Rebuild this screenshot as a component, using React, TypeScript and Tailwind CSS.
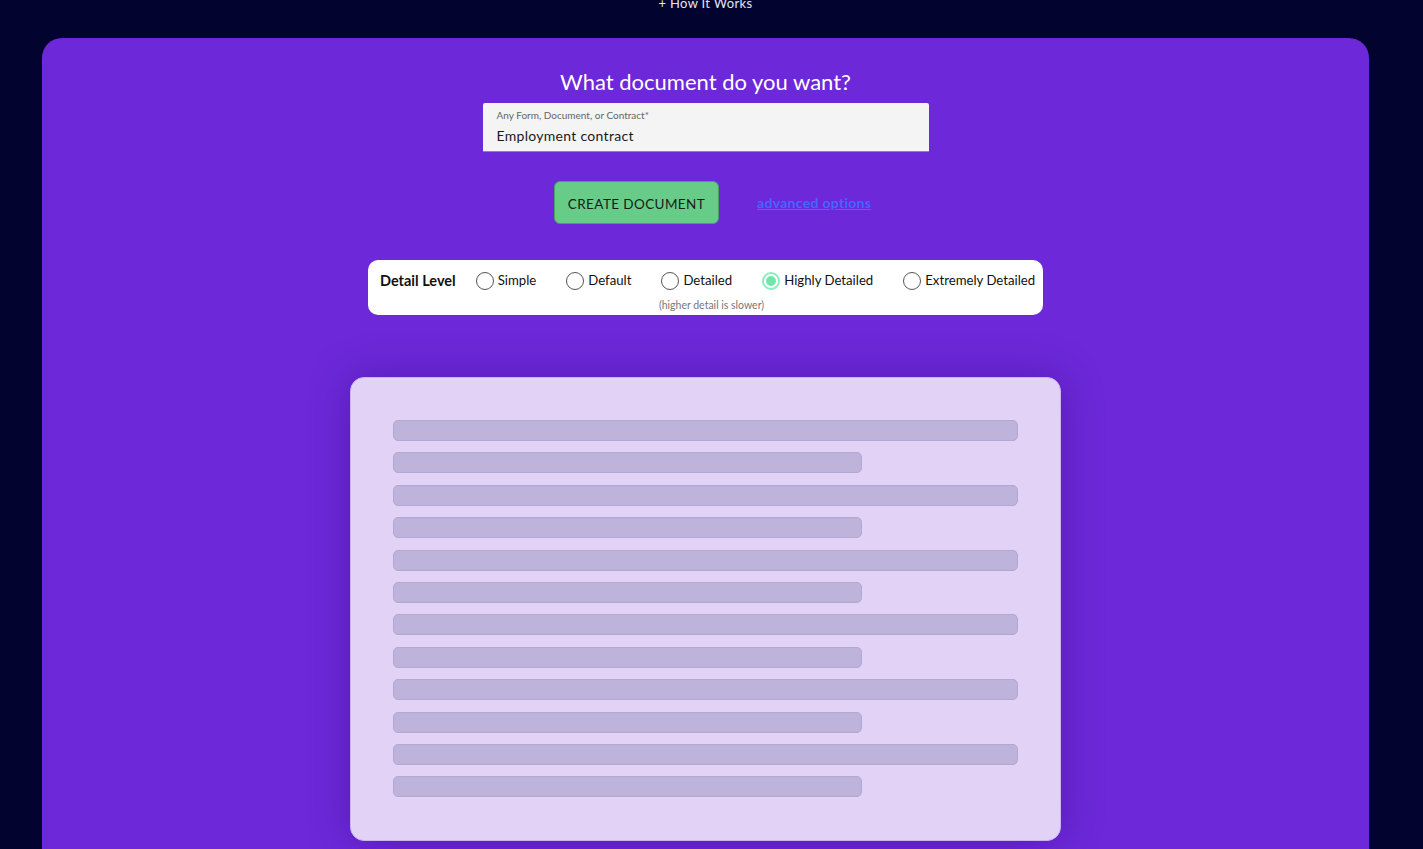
import React from "react";

const options = ["Simple", "Default", "Detailed", "Highly Detailed", "Extremely Detailed"];
const selected = "Highly Detailed";

function Radio({ label, checked }: { label: string; checked: boolean }) {
  return (
    <label className="flex items-center gap-[4px] cursor-pointer whitespace-nowrap">
      <span
        className={
          checked
            ? "w-[18px] h-[18px] rounded-full border-2 border-[#86efbf] flex items-center justify-center"
            : "w-[18px] h-[18px] rounded-full border border-[#555] flex items-center justify-center"
        }
      >
        {checked && <span className="w-[10px] h-[10px] rounded-full bg-[#6ee7a9]" />}
      </span>
      <span className="text-[13.2px] text-[#111]">{label}</span>
    </label>
  );
}

export default function App() {
  const bars = Array.from({ length: 12 }, (_, i) => i);

  return (
    <div className="min-h-screen bg-[#03032f] pl-[42px] pr-[54px] font-['Lato',sans-serif] overflow-hidden">
      <div className="-mt-[6px] h-[44px] text-center text-[13px] text-[#e5e5f0] tracking-wide">
        + How It Works
      </div>

      <section className="bg-[#6d28d9] rounded-[20px] pt-[30px] pb-[40px] flex flex-col items-center">
        <h1 className="text-[22px] text-white leading-[28px] whitespace-nowrap">What document do you want?</h1>

        <div className="mt-[7px] w-[446px] h-[49px] bg-[#f4f4f4] border-b border-[#8a8a8a] rounded-t-[2px] px-[14px] pt-[6px]">
          <div className="text-[10px] text-[#666] leading-[13px]">Any Form, Document, or Contract*</div>
          <div className="text-[14px] text-[#1a1a1a] leading-[20px] mt-[4px] tracking-[0.3px]">Employment contract</div>
        </div>

        <div className="mt-[29px] flex items-center gap-[38px] ml-[15px]">
          <button className="w-[165px] h-[43px] pt-[3px] rounded-[6px] bg-[#66cc88] border border-[#4a9e68] text-[13.5px] text-[#1a1a1a] tracking-[0.4px] whitespace-nowrap">
            CREATE DOCUMENT
          </button>
          <a href="#" className="w-[115px] text-[14px] text-[#4466ff] underline font-bold whitespace-nowrap tracking-[0.3px]">
            advanced options
          </a>
        </div>

        <div className="mt-[36px] w-[675px] h-[55px] bg-white rounded-[10px] px-[12px] pt-[10px] flex flex-col">
          <div className="flex items-center">
            <span className="text-[14.5px] font-bold text-[#111] mr-[20px] whitespace-nowrap">Detail Level</span>
            <div className="flex items-center gap-[30px]">
              {options.map((o) => (
                <Radio key={o} label={o} checked={o === selected} />
              ))}
            </div>
          </div>
          <div className="text-center text-[10.5px] text-[#777] mt-[6px] pl-[12px] whitespace-nowrap">
            (higher detail is slower)
          </div>
        </div>

        <div className="mt-[62px] w-[711px] h-[464px] bg-[#e2d3f6] border border-[#c7b5ee] rounded-[14px] shadow-[0_0_40px_rgba(40,0,110,0.35)] p-[42px] flex flex-col gap-[11.4px]">
          {bars.map((i) => (
            <div
              key={i}
              className={
                i % 2 === 0
                  ? "w-full h-[21px] rounded-[5px] bg-[#beb4db] border border-[#b3a8d4]"
                  : "w-[469px] h-[21px] rounded-[5px] bg-[#beb4db] border border-[#b3a8d4]"
              }
            />
          ))}
        </div>
      </section>
    </div>
  );
}
